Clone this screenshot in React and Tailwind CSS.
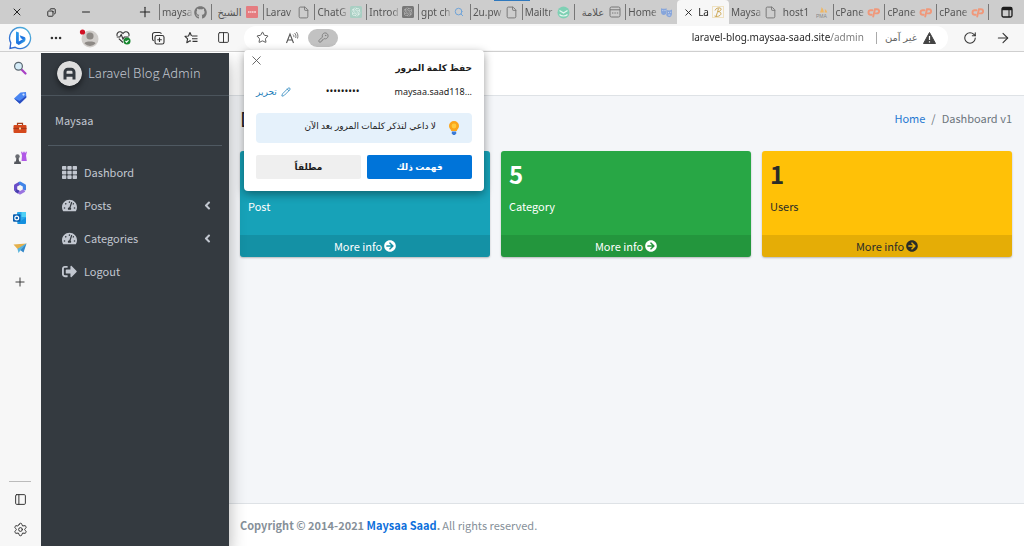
import { useState } from "react";
import {
  X, Plus, Minus, Copy, File, Search, Star, KeyRound, RotateCw, ArrowRight,
  Columns2, PanelLeft, Settings, Pencil, MoreHorizontal,
} from "lucide-react";
import { FaTh, FaTachometerAlt, FaAngleLeft, FaSignOutAlt, FaArrowCircleRight, FaGithub } from "react-icons/fa";
import { SiOpenai } from "react-icons/si";

/* ---------- tab favicons ---------- */

const PageIcon = () => <File size={13} strokeWidth={1.8} className="text-[#777]" />;

const CpanelIcon = () => (
  <svg width="13" height="12" viewBox="0 0 13 12" fill="none" stroke="#f0987a" strokeWidth="1.900" strokeLinecap="round">
    <path d="M5.500 4.200H3.800a2.300 2.300 0 0 0 0 4.600h.9" />
    <path d="M6.200 10.500L8 3.200h2a2 2 0 0 1 0 4.200H8.800" />
  </svg>
);

const RedIcon = () => (
  <svg width="12" height="12" viewBox="0 0 12 12">
    <rect width="12" height="12" rx="1" fill="#e57c80" />
    <path d="M2 6h1.600M4.100 6h1.400M6 6h1.600M8.100 6h1.900" stroke="#f8dcdd" strokeWidth="1.400" />
  </svg>
);

const GptIcon = ({ dark }) => (
  <svg width="12" height="12" viewBox="0 0 24 24">
    <rect width="24" height="24" rx="3" fill={dark ? "#777" : "#a9cfc3"} />
    <g transform="translate(3 3) scale(.75)"><SiOpenai size={24} color={dark ? "#bbb" : "#e9f5f1"} /></g>
  </svg>
);

const MailtrapIcon = () => (
  <svg width="13" height="13" viewBox="0 0 13 13">
    <circle cx="6.500" cy="6.500" r="6" fill="#7fd0b4" />
    <path d="M2.500 4.500l4 2.600 4-2.600M2.500 8.500c2 2 6 2 8 0" fill="none" stroke="#e6f7f1" strokeWidth="1.200" />
  </svg>
);

const FormIcon = () => (
  <svg width="12" height="12" viewBox="0 0 12 12" fill="none" stroke="#777">
    <rect x="1" y="1" width="10" height="10" rx="1.500" />
    <path d="M1 3.800h10M3 7h1.400M5.400 7h1.400M7.800 7h1.400" />
  </svg>
);

const MasksIcon = () => (
  <svg width="13" height="12" viewBox="0 0 13 12" fill="#86a5db">
    <path d="M1 2.200c2 .8 4 .8 5.600 0v3.600C6.600 8 5.200 9 3.800 9S1 8 1 5.800z" />
    <path d="M6.800 4c1.800.8 3.600.6 5.200-.4v3.800c0 2.300-1.300 3.800-2.900 3.800S6.200 9.800 6.200 8.600c.5-.7.6-1.500.6-2.400z" />
    <path d="M2.300 4.600h1M4.500 4.600h1M8 6.600h1M10.200 6.300h1M8.300 9h2" stroke="#d9e3f5" strokeWidth=".8" />
  </svg>
);

const ScriptIcon = () => (
  <svg width="12" height="12" viewBox="0 0 12 12" fill="none" stroke="#cda855">
    <rect x=".5" y=".5" width="11" height="11" stroke="#efe2c2" />
    <path d="M4 10.500C5 8 5.800 5 6.500 2.500M3 4.500C3.500 2.500 6 1.500 8 2s1.300 3-2 3.700c3.200-.2 3.600 2.300 2 3.700-1.500 1.200-4 1.400-5.500.6" />
  </svg>
);

const PmaIcon = () => (
  <svg width="13" height="12" viewBox="0 0 13 12">
    <path d="M4 6.500C5 4 5.500 2.500 5.500 1c1.500 1.500 2.300 3.500 2.300 5.500zM8.500 6.500C9 5 9 4 8.700 3c1.500.8 2.300 2 2.500 3.500z" fill="#efb765" />
    <text x="0" y="11.500" fontSize="5" fontFamily="Liberation Sans" fill="#888">PMA</text>
  </svg>
);

const TABS = [
  { title: "maysa", icon: <FaGithub size={13} className="text-[#777]" />, line: true },
  { title: "الشيخ", icon: <RedIcon />, line: true, rtl: true },
  { title: "Larav", icon: <PageIcon />, line: true },
  { title: "ChatG", icon: <GptIcon />, line: true },
  { title: "Introd", icon: <GptIcon dark />, line: true },
  { title: "gpt ch", icon: <Search size={10} strokeWidth={2.4} className="text-[#6fa3d8]" />, line: true },
  { title: "2u.pw", icon: <PageIcon />, line: true },
  { title: "Mailtr", icon: <MailtrapIcon />, line: true },
  { title: "علامة", icon: <FormIcon />, line: true, rtl: true },
  { title: "Home", icon: <MasksIcon />, line: true },
  { title: "La", icon: <ScriptIcon />, active: true },
  { title: "Maysa", icon: <PageIcon /> },
  { title: "host1", icon: <PmaIcon /> },
  { title: "cPane", icon: <CpanelIcon />, line: true },
  { title: "cPane", icon: <CpanelIcon />, line: true },
  { title: "cPane", icon: <CpanelIcon />, line: true },
];

/* ---------- toolbar drawings ---------- */

const BingIcon = () => (
  <svg width="24" height="24" viewBox="0 0 24 24">
    <defs>
      <linearGradient id="ring" x1="0" y1="1" x2="1" y2="0">
        <stop offset="0" stopColor="#2a5fd0" /><stop offset="1" stopColor="#54b9dc" />
      </linearGradient>
      <linearGradient id="bee" x1="0" y1="0" x2="1" y2="1">
        <stop offset="0" stopColor="#2fa4ee" /><stop offset=".6" stopColor="#1c6fe0" /><stop offset="1" stopColor="#48c9e6" />
      </linearGradient>
    </defs>
    <path d="M12 1.500a10.500 10.500 0 1 1-4.800 19.800L2 22.500l.8-5.600A10.500 10.500 0 0 1 12 1.500z" fill="#fff" stroke="url(#ring)" strokeWidth="1.300" />
    <path d="M8 5.500l2.800 1v9l4-2.300-2-1-1.100-2.900 5.300 1.900c.8 1.200.8 3.400-.5 4.500L10.800 19 8 17.200z" fill="url(#bee)" />
  </svg>
);

const AvatarIcon = () => (
  <svg width="20" height="20" viewBox="0 0 20 20">
    <circle cx="11" cy="11" r="8.500" fill="#d0cdca" />
    <circle cx="11" cy="8" r="3.600" fill="#8d8985" />
    <path d="M5.500 15.500c0-2.600 11-2.600 11 0a7.500 7.500 0 0 1-11 0z" fill="#8d8985" />
    <circle cx="3.500" cy="4" r="2.600" fill="#d21024" />
  </svg>
);

const HealthIcon = () => (
  <svg width="15" height="15" viewBox="0 0 15 15" fill="none" stroke="#333" strokeWidth="1.100">
    <path d="M1.200 6C.3 3.500 2.300 1.500 4.300 1.700 5.500 1.800 6.500 2.800 7 3.500c.5-.7 1.500-1.700 2.700-1.800 2-.2 4 1.800 3.100 4.300M2.800 8.600L7 12.500" />
    <path d="M.8 7h3l1.400-2.500L7 9l1.300-2h4.500" />
    <circle cx="11" cy="11" r="3.500" fill="#16862e" stroke="none" />
    <path d="M9.500 11l1.100 1.100 1.900-2" stroke="#fff" />
  </svg>
);

const CollectionsIcon = () => (
  <svg width="14" height="14" viewBox="0 0 14 14" fill="none" stroke="#333" strokeWidth="1.100">
    <rect x="4" y="4.500" width="9" height="8.500" rx="1.800" />
    <path d="M8.500 6.500v4.500M6.200 8.700h4.600M2.800 9.800A2 2 0 0 1 1.500 8V3.500a2 2 0 0 1 2-2h5a2 2 0 0 1 1.900 1.300" />
  </svg>
);

const FavouritesIcon = () => (
  <svg width="14" height="14" viewBox="0 0 14 14" fill="none" stroke="#333" strokeWidth="1.100">
    <path d="M7.500 5L6 1.500 4.500 5 1 5.300l2.600 2.500-.8 3.900L6 9.800l1 .6" strokeLinejoin="round" />
    <path d="M8 5h5.500M8 7.700h5.500M8.500 10.400h5" />
  </svg>
);

const ReadAloudIcon = () => (
  <svg width="14" height="14" viewBox="0 0 14 14" fill="none" stroke="#555" strokeWidth="1.100">
    <path d="M1.500 12L5 3l3.500 9M2.800 9h4.400" />
    <path d="M8 3.500c.8.600 1 1.600.8 2.600M9.500 2c1.400 1.200 1.700 3 1.200 5M11.300 1c1.600 1.600 2 4 1.200 6.500" strokeWidth=".8" />
  </svg>
);

const TabActionsIcon = () => (
  <svg width="12" height="12" viewBox="0 0 12 12" fill="none" stroke="#1b1b1b">
    <rect x="1" y="1.500" width="10" height="9.500" rx="1.500" strokeWidth="1.300" />
    <path d="M1 3h10" strokeWidth="2.400" />
    <path d="M8 4v7" />
  </svg>
);

/* ---------- browser sidebar ---------- */

const SIDE_APPS = [
  { name: "Search", icon: (
    <svg width="14" height="14" viewBox="0 0 14 14">
      <path d="M8.500 8.500l4 4" stroke="#a83fc4" strokeWidth="2.200" strokeLinecap="round" />
      <circle cx="5.500" cy="5.200" r="3.900" fill="#d5ecf8" stroke="#5b6770" strokeWidth="1.200" />
    </svg>
  ) },
  { name: "Shopping", icon: (
    <svg width="14" height="14" viewBox="0 0 14 14">
      <path d="M7.500 1.500L13 1l.3 5.500-6.500 6.300L1 7.500z" fill="#4a86f2" />
      <path d="M1 7.500l5.800 5.300 6.500-6.300-.1-1.800L6.500 10z" fill="#2b4dbf" />
      <circle cx="10.500" cy="3.600" r="1.100" fill="#cfe0ff" />
    </svg>
  ) },
  { name: "Tools", icon: (
    <svg width="14" height="14" viewBox="0 0 14 14">
      <path d="M4.500 4V2.300h5V4" fill="none" stroke="#a2401b" strokeWidth="1.200" />
      <rect x=".5" y="4" width="13" height="8" rx="1" fill="#d5491d" />
      <path d="M.5 7.500h13" stroke="#a8381a" strokeWidth="1.200" />
      <rect x="6" y="6.500" width="2" height="2" fill="#f7cf9b" />
    </svg>
  ) },
  { name: "Games", icon: (
    <svg width="14" height="14" viewBox="0 0 14 14">
      <path d="M8 .8h1.300v1h1v-1h1.400v1h1v-1H14L13 4.500l.8 5.500H8.500L9 4.500z" fill="#b058e6" />
      <circle cx="4.500" cy="5.500" r="2.200" fill="#6a6d73" />
      <path d="M3.500 7h2l.7 3.500H7.500L8 13H1l.5-2.500h1.300z" fill="#55585e" />
    </svg>
  ) },
  { name: "Microsoft 365", icon: (
    <svg width="14" height="14" viewBox="0 0 14 14" fill="none" strokeWidth="3.200" strokeLinejoin="round">
      <path d="M2.600 9.800V4.700L7 2.200" stroke="#6a4fc8" />
      <path d="M6 2.600L7 2.200l4.400 2.500v4.600" stroke="#4285e8" />
      <path d="M11.400 9.300L7 11.800l-2.500-1.400" stroke="#9a74e0" />
      <path d="M2.600 9.400l3 1.700" stroke="#4a3fb0" />
    </svg>
  ) },
  { name: "Outlook", icon: (
    <svg width="14" height="14" viewBox="0 0 14 14">
      <rect x="4" y="1" width="9" height="11" rx="1" fill="#28a8ea" />
      <path d="M8.500 1H13v5H8.500z" fill="#50d0f5" />
      <path d="M4 12.500L13 6.500v5.500a1 1 0 0 1-1 1H5z" fill="#1490df" />
      <rect x="0" y="3.300" width="7.500" height="7.500" rx="1" fill="#0a5fb0" />
      <circle cx="3.750" cy="7" r="1.900" fill="none" stroke="#fff" strokeWidth="1.200" />
    </svg>
  ) },
  { name: "Drop", icon: (
    <svg width="14" height="14" viewBox="0 0 14 14">
      <path d="M.5 3.500L13.500 2.500 4.500 8z" fill="#e4b04c" />
      <path d="M4.500 8l9-5.500L10.500 11.500 7.500 9.200z" fill="#3487c9" />
      <path d="M4.500 8l9-5.500-6 6.700L5.500 12z" fill="#5bb5dc" />
    </svg>
  ) },
];

/* ---------- password prompt ---------- */

function SavePassword({ onClose }) {
  return (
    <div dir="rtl" className="absolute top-full left-0 z-20 w-60 rounded bg-white p-3 font-['Noto_Sans','DejaVu_Sans',sans-serif] text-[9px] text-[#1b1b1b] shadow-[0_3px_10px_rgba(0,0,0,0.4)]">
      <button aria-label="إغلاق" onClick={onClose} className="absolute top-0.5 left-1 p-px text-[#555]">
        <X size={15} strokeWidth={1.4} />
      </button>
      <h2 className="leading-3 font-bold">حفظ كلمة المرور</h2>
      <div className="mt-2 flex h-5 items-center justify-between">
        <span dir="ltr">maysaa.saad118...</span>
        <span className="text-[10px]">•••••••••</span>
        <button className="flex items-center gap-1 text-[#1a7bb8]">
          <Pencil size={10} strokeWidth={1.8} /> تحرير
        </button>
      </div>
      <div className="mt-[11px] flex h-[30px] items-center gap-3 rounded-sm bg-[#e5f1fb] px-3">
        <svg width="12" height="16" viewBox="0 0 12 16">
          <path d="M6 1a5 5 0 0 1 5 5c0 2.400-1.800 3-2.300 5H3.300C2.800 9 1 8.400 1 6a5 5 0 0 1 5-5z" fill="#fba51a" />
          <circle cx="6" cy="6" r="2.400" fill="#ffc93c" />
          <path d="M3.800 11.500h4.400v1.800L7 15H5l-1.200-1.700z" fill="#3b7bd6" />
        </svg>
        <span className="pb-1 font-medium">لا داعي لتذكر كلمات المرور بعد الآن</span>
      </div>
      <div className="mt-3 flex gap-1.5 font-bold">
        <button onClick={onClose} className="h-6 flex-1 rounded-xs bg-[#0074d9] text-white">فهمت ذلك</button>
        <button onClick={onClose} className="h-6 flex-1 rounded-xs bg-[#efefef]">مطلقاً</button>
      </div>
    </div>
  );
}

function TabStrip() {
  return (
    <div className="relative flex h-6 items-stretch bg-[#cdcdcd] text-[#222]">
      <div className="flex w-[159px] items-center">
        <button aria-label="Close window" className="flex w-[34px] justify-center"><X size={12} strokeWidth={2} /></button>
        <button aria-label="Restore" className="flex w-[35px] justify-center"><Copy size={9} strokeWidth={2.4} className="rotate-90" /></button>
        <button aria-label="Minimize" className="flex w-[34px] justify-center"><Minus size={12} strokeWidth={2} /></button>
        <button aria-label="New tab" className="ml-auto flex w-7 justify-center"><Plus size={16} strokeWidth={1.6} /></button>
      </div>
      <div className="flex min-w-0 flex-1">
        {TABS.map((tab, i) => (
          <button key={i}
            className={`flex min-w-0 flex-1 basis-0 items-center py-1 pr-1 text-[10px] ${
              tab.active ? "rounded-t bg-[#f7f7f7] text-[#222]" : "text-[#555]"
            }`}
          >
            {tab.active && <X size={11} strokeWidth={2} className="mr-0.5 ml-1.5 shrink-0" />}
            <span dir={tab.rtl ? "rtl" : "ltr"}
              className={`flex h-4 min-w-0 flex-1 items-center overflow-hidden whitespace-nowrap ${
                tab.line ? "border-l border-[#777]" : ""
              } ${tab.rtl ? "pr-1" : "pl-0.5 [mask-image:linear-gradient(to_right,#000_75%,transparent)]"}`}
            >
              {tab.title}
            </span>
            <span className="flex w-[13px] shrink-0 justify-center">{tab.icon}</span>
          </button>
        ))}
      </div>
      <div className="flex w-9 items-center">
        <span className="h-4 border-l border-[#777]" />
        <button aria-label="Tab actions" className="flex flex-1 justify-center"><TabActionsIcon /></button>
      </div>
      <span className="absolute top-0 left-[494px] h-px w-9 bg-[#2f78bd]" />
    </div>
  );
}

function Toolbar({ prompt, onClose }) {
  const slot = "flex w-[33px] justify-center";
  return (
    <div className="flex h-7 items-center border-b border-[#cfcfcf] bg-[#f7f7f7] text-[#333]">
      <button aria-label="Bing" className="flex w-10 justify-center"><BingIcon /></button>
      <button aria-label="Menu" className="flex w-8 justify-center"><MoreHorizontal size={14} strokeWidth={2.4} /></button>
      <button aria-label="Profile" className={slot}><AvatarIcon /></button>
      <button aria-label="Health" className="flex w-9 justify-center"><HealthIcon /></button>
      <button aria-label="Collections" className={slot}><CollectionsIcon /></button>
      <button aria-label="Favorites" className={slot}><FavouritesIcon /></button>
      <button aria-label="Split screen" className={slot}><Columns2 size={13} strokeWidth={1.8} /></button>
      <div className="relative ml-1 flex h-6 min-w-0 flex-1 items-center rounded-full bg-white">
        <button aria-label="Add to favorites" className="flex w-9 justify-center text-[#555]"><Star size={13} strokeWidth={1.8} /></button>
        <button aria-label="Read aloud" className="flex w-6 justify-center"><ReadAloudIcon /></button>
        <button aria-label="Passwords" className="ml-1 flex h-[18px] w-[30px] items-center justify-center rounded-full bg-[#c2c2c2] text-[#777]">
          <KeyRound size={11} strokeWidth={1.8} />
        </button>
        <input aria-label="Address" dir="ltr" defaultValue="laravel-blog.maysaa-saad.site/admin"
          className="min-w-0 flex-1 bg-[linear-gradient(to_left,#777_33px,#222_33px)] bg-clip-text text-right text-[10px] text-transparent outline-none" />
        <span className="mr-2 ml-3 h-3 border-l border-[#aaa]" />
        <span dir="rtl" className="flex items-center gap-1.5 pr-3 text-[10px] text-[#666]">
          <svg width="13" height="12" viewBox="0 0 13 12">
            <path d="M6.500.5l6 11H.5z" fill="#444" stroke="#444" strokeLinejoin="round" />
            <path d="M6.500 4v4M6.500 9.200v1.200" stroke="#fff" strokeWidth="1.200" />
          </svg>
          غير آمن
        </span>
        {prompt && <SavePassword onClose={onClose} />}
      </div>
      <div className="flex w-[76px] items-center justify-around pr-1 pl-1.5">
        <button aria-label="Refresh"><RotateCw size={14} strokeWidth={1.8} /></button>
        <button aria-label="Forward"><ArrowRight size={16} strokeWidth={1.6} /></button>
      </div>
    </div>
  );
}

function BrowserSidebar() {
  return (
    <aside className="flex w-[41px] shrink-0 flex-col items-center bg-[#f7f7f7] pt-px pr-px text-[#333]">
      {SIDE_APPS.map(app => (
        <button key={app.name} aria-label={app.name} className="flex h-[30px] items-center">{app.icon}</button>
      ))}
      <button aria-label="Add" className="mt-1 flex h-[30px] items-center"><Plus size={14} strokeWidth={1.6} /></button>
      <span className="mt-auto w-[22px] border-t border-[#bbb]" />
      <button aria-label="Hide sidebar" className="mt-0.5 flex h-[30px] items-center"><PanelLeft size={13} strokeWidth={1.8} /></button>
      <button aria-label="Settings" className="mb-0.5 flex h-[30px] items-center"><Settings size={15} strokeWidth={1.6} /></button>
    </aside>
  );
}

/* ---------- dashboard ---------- */

const NAV = [
  { label: "Dashbord", icon: FaTh },
  { label: "Posts", icon: FaTachometerAlt, tree: true },
  { label: "Categories", icon: FaTachometerAlt, tree: true },
  { label: "Logout", icon: FaSignOutAlt },
];

const BOXES = [
  { count: "3", label: "Post", cls: "bg-[#17a2b8] text-white" },
  { count: "5", label: "Category", cls: "bg-[#28a745] text-white" },
  { count: "1", label: "Users", cls: "bg-[#ffc107] text-[#2a2c28]" },
];

function AdminSidebar() {
  return (
    <aside className="z-10 w-[188px] shrink-0 bg-[#343a40] text-[#c2c7d0] shadow-[0_8px_16px_rgba(0,0,0,0.3)]">
      <a href="#home" className="flex h-[43px] items-center gap-1.5 border-b border-[#4b545c] pb-0.5 pl-4 text-[13px] font-light">
        <svg width="25" height="25" viewBox="0 0 25 25" className="rounded-full shadow-[0_3px_6px_rgba(0,0,0,0.5)]">
          <circle cx="12.500" cy="12.500" r="12.500" fill="#dedede" />
          <path d="M8 18.500V11a2.800 2.800 0 0 1 2.800-2.800h3.400A2.800 2.800 0 0 1 17 11v7.500M8 14.200h9" fill="none" stroke="#343a40" strokeWidth="3" />
        </svg>
        Laravel Blog Admin
      </a>
      <div className="mx-[7px] flex h-[50px] items-center border-b border-[#4f5962] pl-[7px]">
        <a href="#user">Maysaa</a>
      </div>
      <nav className="mx-[7px] mt-2.5 flex flex-col gap-px">
        {NAV.map(item => (
          <a key={item.label} href={"#" + item.label} className="flex h-8 items-center gap-1.5 pr-2 pl-3">
            <span className="flex w-[18px] justify-center"><item.icon size={15} /></span>
            {item.label}
            {item.tree && <FaAngleLeft size={13} className="ml-auto" />}
          </a>
        ))}
      </nav>
    </aside>
  );
}

function StatBox({ count, label, cls }) {
  return (
    <div className={`overflow-hidden rounded-[3px] shadow-[0_1px_2px_rgba(0,0,0,0.25)] ${cls}`}>
      <div className="h-[84px] px-2 pt-[7px]">
        <h3 className="text-[24px] leading-8 font-bold">{count}</h3>
        <p className="mt-2 leading-4">{label}</p>
      </div>
      <a href={"#" + label} className="flex h-[22px] items-center justify-center gap-0.5 bg-black/10">
        More info <FaArrowCircleRight size={12} />
      </a>
    </div>
  );
}

export default function App() {
  const [prompt, setPrompt] = useState(true);

  return (
    <div className="flex min-h-screen flex-col bg-white font-['Noto_Sans','DejaVu_Sans',sans-serif]">
      <header>
        <TabStrip />
        <Toolbar prompt={prompt} onClose={() => setPrompt(false)} />
      </header>
      <div className="flex flex-1">
        <BrowserSidebar />
        <div className="flex min-w-0 flex-1 overflow-hidden border-t border-white font-['Noto_Sans_CJK_SC',sans-serif] text-[11px]">
          <AdminSidebar />
          <main className="flex min-w-0 flex-1 flex-col bg-[#f4f6f9]">
            <div className="h-[43px] border-b border-[#dee2e6] bg-white" />
            <div className="flex h-[55px] items-center justify-between pr-3 pb-2.5 pl-[11px]">
              <h1 className="text-[20px] text-[#212529]">Dashboard</h1>
              <nav className="flex gap-1.5 text-[#6c757d]">
                <a href="#home" className="text-[#1f78d1]">Home</a>
                <span>/</span>
                <span>Dashboard v1</span>
              </nav>
            </div>
            <section className="grid grid-cols-3 gap-[11px] pr-3 pl-[11px]">
              {BOXES.map(box => <StatBox key={box.label} {...box} />)}
            </section>
            <footer className="mt-auto flex h-[43px] items-center gap-0.5 border-t border-[#dee2e6] bg-white pl-[11px] text-[#869099]">
              <strong>Copyright © 2014-2021 <a href="#author" className="text-[#0d6fdb]">Maysaa Saad</a>.</strong>
              All rights reserved.
            </footer>
          </main>
        </div>
      </div>
    </div>
  );
}
